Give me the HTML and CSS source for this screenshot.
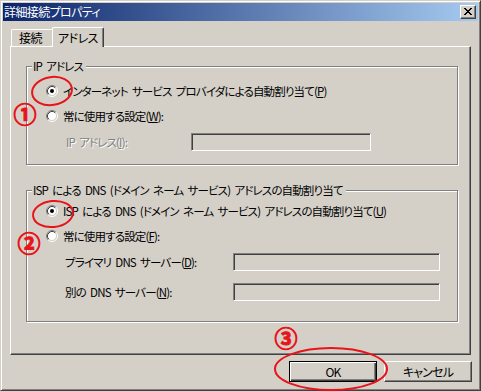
FILE: index.html
```html
<!DOCTYPE html>
<html lang="ja">
<head>
<meta charset="utf-8">
<title>詳細接続プロパティ</title>
<link rel="stylesheet" href="styles.css">
</head>
<body>
<div class="screen">
  <div class="window">
    <div class="titlebar">
      <span class="title">詳細接続プロパティ</span>
      <button class="close" type="button" aria-label="閉じる">
        <svg width="8" height="7" viewBox="0 0 8 7"><path d="M0 0h2v1h-2z M6 0h2v1h-2z M1 1h2v1h-2z M5 1h2v1h-2z M2 2h4v1h-4z M3 3h2v1h-2z M2 4h4v1h-4z M1 5h2v1h-2z M5 5h2v1h-2z M0 6h2v1h-2z M6 6h2v1h-2z" fill="#000"/></svg>
      </button>
    </div>
    <div class="body">
      <div class="tabs">
        <div class="tab">接続</div>
        <div class="tab active">アドレス</div>
      </div>
      <div class="panel">
        <div class="group g1">
          <div class="legend">IP アドレス</div>
          <div class="radio-row">
            <svg class="radio" width="12" height="12" viewBox="0 0 12 12"><circle cx="6" cy="6" r="4.5" fill="#fff"/><path d="M2.11 9.89A5.5 5.5 0 0 1 9.89 2.11" fill="none" stroke="#808080"/><path d="M9.89 2.11A5.5 5.5 0 0 1 2.11 9.89" fill="none" stroke="#fff"/><path d="M2.82 9.18A4.5 4.5 0 0 1 9.18 2.82" fill="none" stroke="#404040"/><path d="M9.18 2.82A4.5 4.5 0 0 1 2.82 9.18" fill="none" stroke="#D4D0C8"/><circle cx="6" cy="6" r="2" fill="#000"/></svg>
            <span>インターネット サービス プロバイダによる自動割り当て(<u>P</u>)</span>
          </div>
          <div class="radio-row">
            <svg class="radio" width="12" height="12" viewBox="0 0 12 12"><circle cx="6" cy="6" r="4.5" fill="#fff"/><path d="M2.11 9.89A5.5 5.5 0 0 1 9.89 2.11" fill="none" stroke="#808080"/><path d="M9.89 2.11A5.5 5.5 0 0 1 2.11 9.89" fill="none" stroke="#fff"/><path d="M2.82 9.18A4.5 4.5 0 0 1 9.18 2.82" fill="none" stroke="#404040"/><path d="M9.18 2.82A4.5 4.5 0 0 1 2.82 9.18" fill="none" stroke="#D4D0C8"/></svg>
            <span>常に使用する設定(<u>W</u>):</span>
          </div>
          <div class="field-row ip">
            <span class="field-label disabled">IP アドレス(<u>I</u>):</span>
            <span class="field w180"></span>
          </div>
        </div>
        <div class="group g2">
          <div class="legend">ISP による DNS (ドメイン ネーム サービス) アドレスの自動割り当て</div>
          <div class="radio-row">
            <svg class="radio" width="12" height="12" viewBox="0 0 12 12"><circle cx="6" cy="6" r="4.5" fill="#fff"/><path d="M2.11 9.89A5.5 5.5 0 0 1 9.89 2.11" fill="none" stroke="#808080"/><path d="M9.89 2.11A5.5 5.5 0 0 1 2.11 9.89" fill="none" stroke="#fff"/><path d="M2.82 9.18A4.5 4.5 0 0 1 9.18 2.82" fill="none" stroke="#404040"/><path d="M9.18 2.82A4.5 4.5 0 0 1 2.82 9.18" fill="none" stroke="#D4D0C8"/><circle cx="6" cy="6" r="2" fill="#000"/></svg>
            <span>ISP による DNS (ドメイン ネーム サービス) アドレスの自動割り当て(<u>U</u>)</span>
          </div>
          <div class="radio-row">
            <svg class="radio" width="12" height="12" viewBox="0 0 12 12"><circle cx="6" cy="6" r="4.5" fill="#fff"/><path d="M2.11 9.89A5.5 5.5 0 0 1 9.89 2.11" fill="none" stroke="#808080"/><path d="M9.89 2.11A5.5 5.5 0 0 1 2.11 9.89" fill="none" stroke="#fff"/><path d="M2.82 9.18A4.5 4.5 0 0 1 9.18 2.82" fill="none" stroke="#404040"/><path d="M9.18 2.82A4.5 4.5 0 0 1 2.82 9.18" fill="none" stroke="#D4D0C8"/></svg>
            <span>常に使用する設定(<u>F</u>):</span>
          </div>
          <div class="field-row dns">
            <span class="field-label">プライマリ DNS サーバー(<u>D</u>):</span>
            <span class="field w207"></span>
          </div>
          <div class="field-row dns second">
            <span class="field-label">別の DNS サーバー(<u>N</u>):</span>
            <span class="field w207"></span>
          </div>
        </div>
      </div>
      <div class="buttons">
        <button class="btn default" type="button">OK</button>
        <button class="btn" type="button">キャンセル</button>
      </div>
    </div>
  </div>
  <div class="annotations">
    <svg width="481" height="391" viewBox="0 0 481 391">
      <ellipse cx="52" cy="91" rx="20" ry="14" transform="rotate(-8 52 91)" fill="none" stroke="#E8141A" stroke-width="2"/>
      <ellipse cx="53" cy="214" rx="20" ry="13" transform="rotate(-6 53 214)" fill="none" stroke="#E8141A" stroke-width="2"/>
      <ellipse cx="331" cy="369" rx="56" ry="21" fill="none" stroke="#E8141A" stroke-width="2"/>
    </svg>
    <span class="num n1">①</span>
    <span class="num n2">②</span>
    <span class="num n3">③</span>
  </div>
</div>
</body>
</html>
```

FILE: styles.css
```css
html, body {
  margin: 0;
  padding: 0;
  background: #D4D0C8;
}

.screen {
  position: relative;
  width: 481px;
  height: 391px;
  overflow: hidden;
}

.window {
  width: 481px;
  height: 391px;
  box-sizing: border-box;
  border: 1px solid;
  border-color: #D4D0C8 #404040 #404040 #D4D0C8;
  box-shadow: inset 1px 1px 0 #fff, inset -1px -1px 0 #808080;
  padding: 2px;
  background: #D4D0C8;
  display: flex;
  flex-direction: column;
  font-family: "Noto Sans CJK JP", "Liberation Sans", sans-serif;
  font-size: 11.5px;
  font-feature-settings: "palt" 1;
  letter-spacing: -0.85px;
  word-spacing: 2.5px;
  color: #000;
}

.titlebar {
  height: 18px;
  flex: none;
  background: linear-gradient(to right, #0A246A, #A6CAF0);
  display: flex;
  align-items: center;
  justify-content: space-between;
  padding: 0 2px 0 1px;
}

.title {
  color: #fff;
  font-size: 12px;
  line-height: 14px;
  letter-spacing: -0.6px;
}

.close {
  width: 16px;
  height: 14px;
  box-sizing: border-box;
  border: 1px solid;
  border-color: #fff #404040 #404040 #fff;
  box-shadow: inset -1px -1px 0 #808080;
  background: #D4D0C8;
  padding: 2px 0 0 0;
  margin: 0;
  display: flex;
  align-items: flex-start;
  justify-content: center;
}

.close svg {
  display: block;
}

.body {
  flex: 1;
  display: flex;
  flex-direction: column;
  padding: 6px 6px 6px 7px;
}

.tabs {
  display: flex;
  align-items: flex-end;
  height: 19px;
  padding-left: 1px;
}

.tab {
  box-sizing: border-box;
  height: 17px;
  width: 43px;
  border: 1px solid;
  border-color: #fff #404040 transparent #fff;
  border-bottom: none;
  border-radius: 2px 2px 0 0;
  box-shadow: inset -1px 0 0 #808080;
  padding: 1px 0 0 7px;
  font-size: 12px;
  line-height: 14px;
  letter-spacing: -0.5px;
  white-space: nowrap;
  background: #D4D0C8;
}

.tab.active {
  position: relative;
  z-index: 1;
  width: 52px;
  height: 20px;
  margin-left: -2px;
  margin-bottom: -1px;
  padding: 3px 0 0 0;
  text-align: center;
}

.panel {
  width: 461px;
  height: 309px;
  box-sizing: border-box;
  border: 1px solid;
  border-color: #fff #404040 #404040 #fff;
  box-shadow: inset -1px -1px 0 #808080;
  padding: 19px 12px 0 15px;
}

.group {
  position: relative;
  border: 1px solid #808080;
  box-shadow: inset 1px 1px 0 #fff, 1px 1px 0 #fff;
  display: flex;
  flex-direction: column;
  gap: 9px;
}

.g1 {
  padding: 16px 0 13px 19px;
}

.g2 {
  margin-top: 25px;
  padding: 12px 0 20px 19px;
}

.legend {
  position: absolute;
  top: -8px;
  left: 5px;
  line-height: 14px;
  padding: 0 3px 0 1px;
  background: #D4D0C8;
  white-space: nowrap;
}

.radio-row {
  height: 16px;
  display: flex;
  align-items: center;
  gap: 5px;
  line-height: 14px;
  white-space: nowrap;
}

.radio {
  display: block;
  flex: none;
}

.field-row {
  height: 18px;
  display: flex;
  align-items: center;
  line-height: 14px;
  white-space: nowrap;
}

.field-row.ip {
  padding-left: 20px;
}

.field-row.ip .field-label {
  width: 125px;
}

.field-row.dns {
  padding-left: 19px;
}

.field-row.dns .field-label {
  width: 168px;
}

.field-row.second {
  margin-top: 3px;
}

.field-label {
  flex: none;
}

.disabled {
  color: #808080;
  text-shadow: 1px 1px 0 #fff;
}

.field {
  display: block;
  box-sizing: border-box;
  height: 18px;
  border: 1px solid;
  border-color: #808080 #fff #fff #808080;
  box-shadow: inset 1px 1px 0 #404040, inset -1px -1px 0 #D4D0C8;
  background: #D4D0C8;
}

.w180 { width: 180px; }
.w207 { width: 207px; }

.buttons {
  display: flex;
  justify-content: flex-end;
  gap: 7px;
  margin-top: 6px;
}

.btn {
  width: 88px;
  height: 21px;
  box-sizing: border-box;
  margin: 0;
  padding: 0;
  border: 1px solid;
  border-color: #fff #404040 #404040 #fff;
  box-shadow: inset -1px -1px 0 #808080;
  background: #D4D0C8;
  font-family: "Noto Sans CJK JP", "Liberation Sans", sans-serif;
  font-size: 12px;
  font-feature-settings: "palt" 1;
  letter-spacing: -0.8px;
  line-height: 14px;
  color: #000;
}

.btn.default {
  border-color: #000;
  box-shadow: inset 1px 1px 0 #fff, inset -1px -1px 0 #404040, inset -2px -2px 0 #808080;
}

.annotations {
  position: absolute;
  left: 0;
  top: 0;
  width: 481px;
  height: 391px;
  pointer-events: none;
}

.annotations svg {
  position: absolute;
  left: 0;
  top: 0;
}

.num {
  position: absolute;
  width: 26px;
  height: 26px;
  line-height: 26px;
  text-align: center;
  font-family: "Noto Sans CJK JP", sans-serif;
  font-size: 23px;
  font-weight: bold;
  letter-spacing: 0;
  color: #E8141A;
  -webkit-text-stroke: 1px #E8141A;
}

.n1 { left: 12px; top: 100px; }
.n2 { left: 16px; top: 229px; }
.n3 { left: 273px; top: 324px; }
```
